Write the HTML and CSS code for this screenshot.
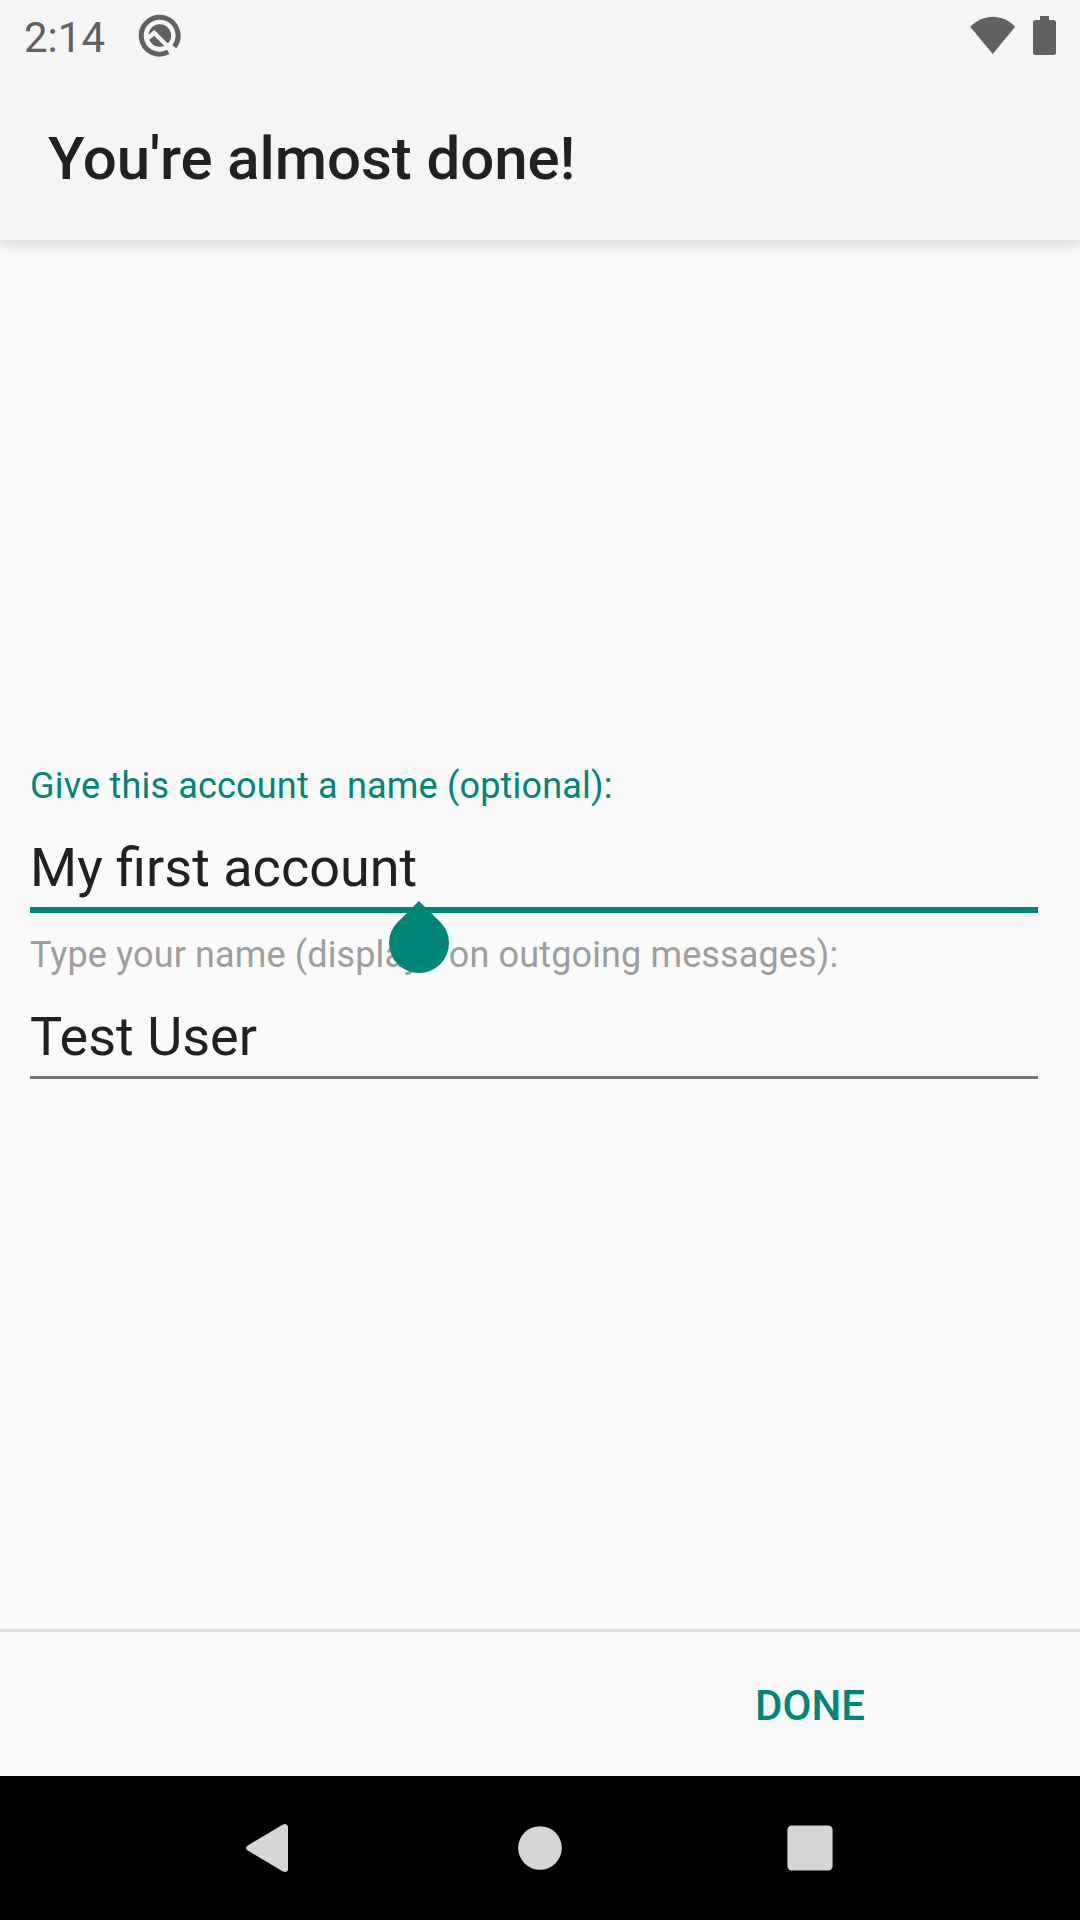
FILE: index.html
```html
<!DOCTYPE html>
<html lang="en">
<head>
<meta charset="utf-8">
<title>Account setup</title>
<link rel="stylesheet" href="styles.css">
</head>
<body>
<div class="screen">
  <header class="app-header">
    <div class="status-bar">
      <span class="clock">2:14</span>
      <svg class="status-q" width="44" height="44" viewBox="0 0 44 44" fill="none">
        <path d="M30.300 37.900A18.400 18.400 0 1 1 36.300 32.800" stroke="#616161" stroke-width="5"/>
        <circle cx="21.800" cy="21.500" r="11.300" fill="#616161"/>
        <path d="M10 24 16.200 18.800 33.800 36.400" stroke="#f5f5f5" stroke-width="4.300"/>
      </svg>
      <div class="status-right">
        <svg width="46" height="38" viewBox="0 0 46 38"><path d="M.2 10.700C13-2.700 33-2.700 45.200 10.700L22.700 38z" fill="#616161"/></svg>
        <svg width="23" height="39" viewBox="0 0 23 39"><path d="M7 0h9v4h4.500a2.500 2.500 0 0 1 2.500 2.500v30a2.500 2.500 0 0 1-2.500 2.500h-18a2.500 2.500 0 0 1-2.500-2.500v-30a2.500 2.500 0 0 1 2.500-2.500h4.500z" fill="#616161"/></svg>
      </div>
    </div>
    <h1 class="title">You're almost done!</h1>
  </header>
  <main class="form">
    <div class="field field-active">
      <label class="label"><span>Give this account a name (optional):</span></label>
      <div class="value"><span>My first account</span></div>
      <svg class="handle" width="60" height="72" viewBox="0 0 60 72"><path d="M30 0 51.200 21Q60 30 60 42A30 30 0 0 1 0 42Q0 30 8.800 21z" fill="#008577"/></svg>
    </div>
    <div class="field">
      <label class="label"><span>Type your name (displays on outgoing messages):</span></label>
      <div class="value"><span>Test User</span></div>
    </div>
  </main>
  <footer class="actions"><button class="done">DONE</button></footer>
  <nav class="nav-bar">
    <svg width="60" height="60" viewBox="0 0 60 60"><path d="M7.500 27.700 42.500 6.700Q47 4.500 48 8.500V51.500Q47 55.500 42.500 53.300L7.500 32.300Q4.500 30 7.500 27.700z" fill="#d6d6d6"/></svg>
    <svg width="60" height="60" viewBox="0 0 60 60"><circle cx="30" cy="30" r="21.800" fill="#d6d6d6"/></svg>
    <svg width="60" height="60" viewBox="0 0 60 60"><rect x="7.400" y="7.400" width="45.200" height="45.200" rx="4.500" fill="#d6d6d6"/></svg>
  </nav>
</div>
</body>
</html>
```
FILE: styles.css
```css
* { box-sizing: border-box; }
body {
  margin: 0;
  font-family: Roboto, "Liberation Sans", sans-serif;
  color: #212121;
}
svg { display: block; }
.screen {
  display: flex;
  flex-direction: column;
  width: 1080px;
  height: 1920px;
  background: #fafafa;
}
.app-header {
  height: 240px;
  background: #f5f5f5;
  box-shadow: 0 5px 14px rgba(0, 0, 0, .14);
}
.status-bar {
  display: flex;
  align-items: flex-start;
  height: 72px;
  padding: 0 24px;
  color: #616161;
}
.clock {
  width: 114px;
  padding-top: 13px;
  font-size: 42px;
  line-height: 50px;
}
.status-q { margin-top: 14px; }
.status-right {
  display: flex;
  gap: 17px;
  margin: 16px 0 0 auto;
}
.title {
  margin: 0;
  padding: 5px 48px 0;
  font-size: 60px;
  font-weight: 500;
  line-height: 163px;
  letter-spacing: -.08px;
}
.form {
  flex: 1;
  padding: 525px 42px 0 30px;
}
.field {
  position: relative;
  height: 169px;
  padding-bottom: 8px;
}
.label {
  display: block;
  font-size: 36px;
  line-height: 42px;
  letter-spacing: .13px;
  color: #9e9e9e;
}
.value {
  height: 103px;
  padding-top: 29px;
  border-bottom: 3px solid #757575;
  font-size: 54px;
  line-height: 64px;
}
.field-active .label {
  color: #008577;
  letter-spacing: .19px;
}
.field-active .value {
  height: 106px;
  border-bottom: 6px solid #008577;
}
.handle {
  position: absolute;
  left: 359px;
  top: 136px;
  z-index: 1;
}
.actions {
  display: flex;
  justify-content: flex-end;
  height: 147px;
  padding: 4px 215px 0 0;
  border-top: 3px solid #dcdcdc;
}
.done {
  padding: 0;
  border: 0;
  background: none;
  color: #008577;
  font: 500 42px/140px Roboto, sans-serif;
}
.nav-bar {
  display: flex;
  justify-content: center;
  align-items: center;
  gap: 210px;
  height: 144px;
  background: #000;
}
```
